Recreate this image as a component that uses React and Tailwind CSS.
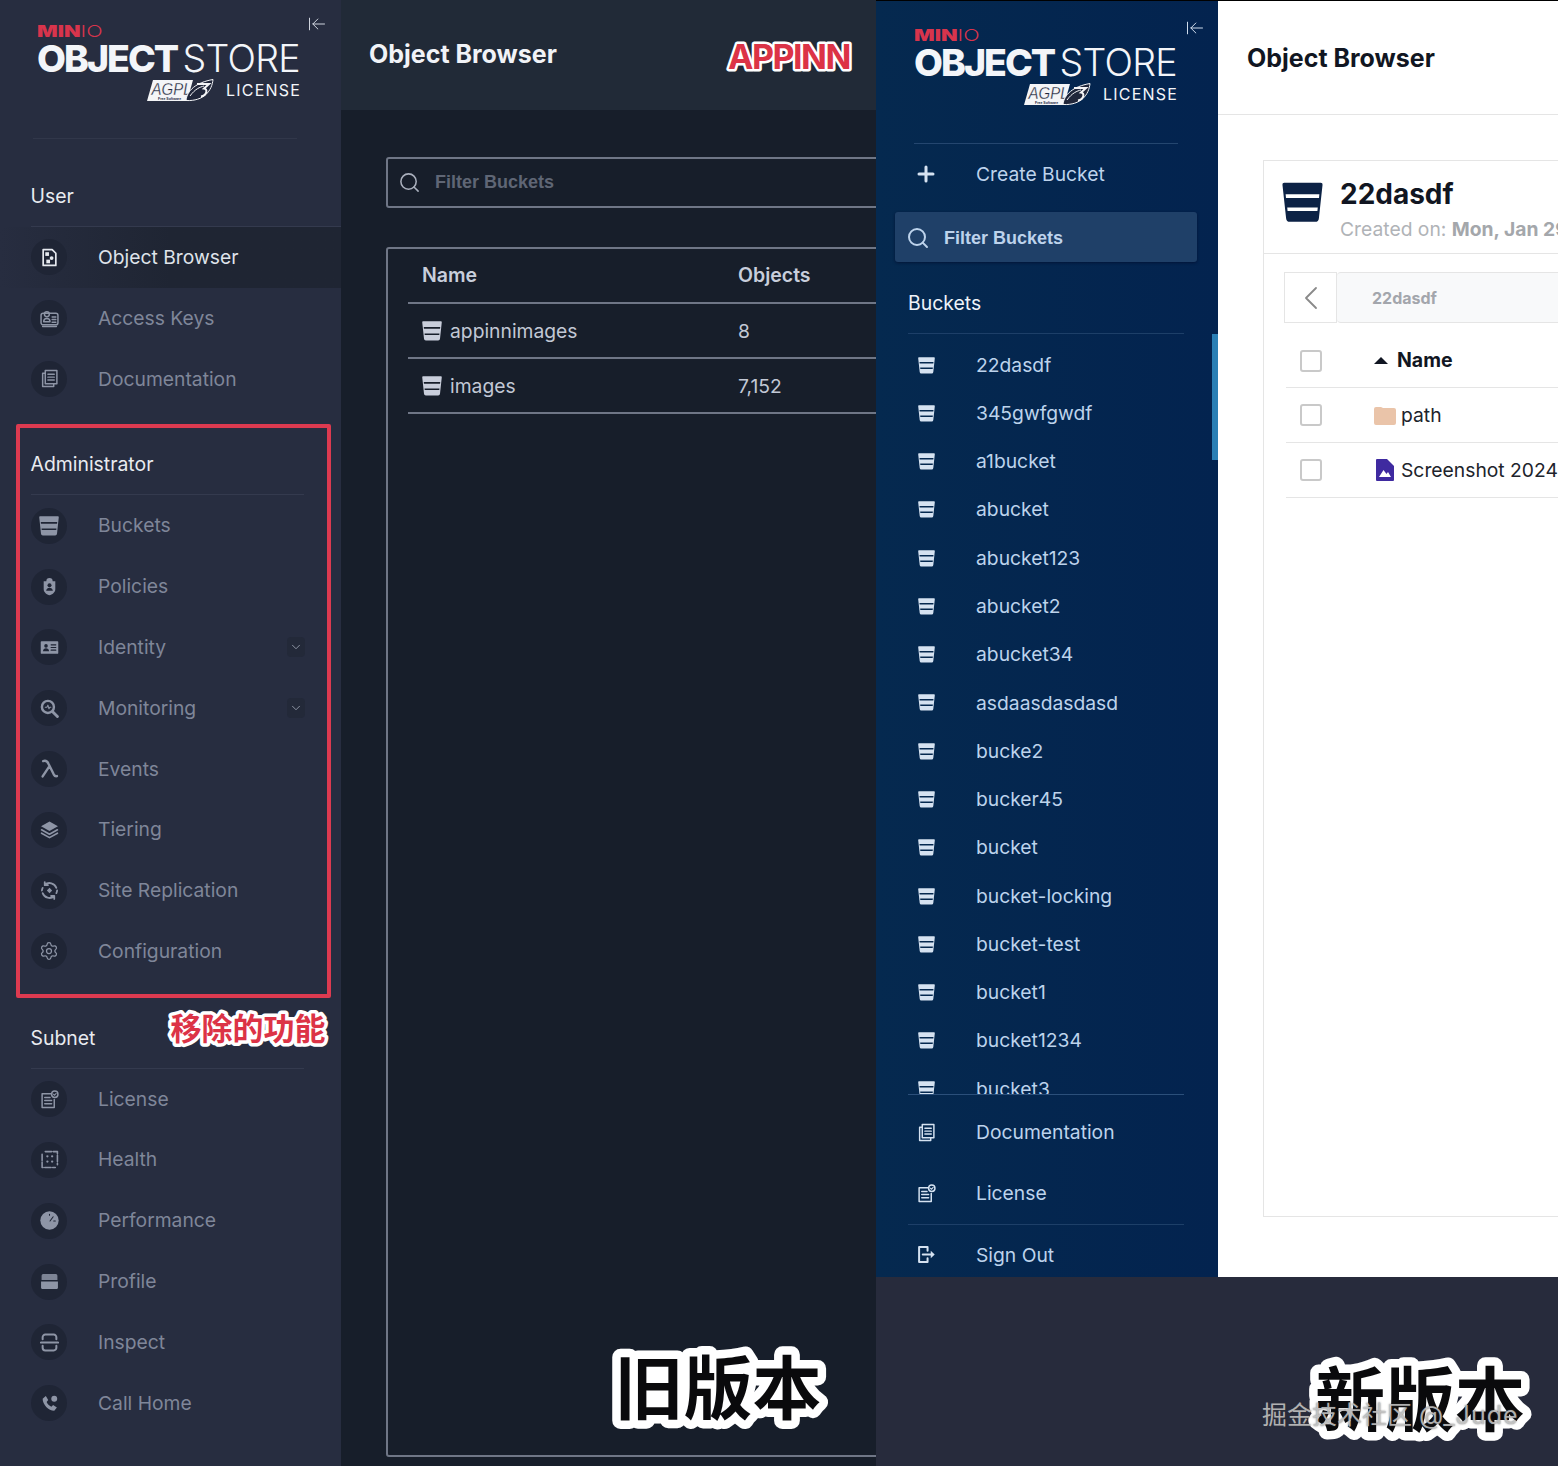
import React from "react";
import { ArrowLeftToLine, Search, ChevronDown, ChevronLeft, Plus, Settings } from "lucide-react";

const FONT = { fontFamily: "Inter, 'Noto Sans CJK SC', sans-serif" };

const Svg = ({ children, size = 19 }) => (
  <svg width={size} height={size} viewBox="0 0 18 18" fill="none" stroke="currentColor" strokeWidth="1.400" strokeLinejoin="round" strokeLinecap="round">
    {children}
  </svg>
);

const Bucket = ({ size = 20 }) => (
  <svg width={size} height={size} viewBox="0 0 18 18" fill="currentColor" stroke="none">
    <path fillRule="evenodd" d="M1 .3h16a.8.8 0 0 1 .8.9L16.200 15.900a1.700 1.700 0 0 1-1.700 1.600h-11a1.700 1.700 0 0 1-1.700-1.600L.2 1.200A.8.8 0 0 1 1 .3ZM1.600 5.400l.15 1.600h14.500l.15-1.600ZM2.300 11.200l.15 1.500h13.100l.15-1.500Z" />
  </svg>
);

const icons = {
  browser: (
    <Svg>
      <path d="M3 1.500h8.500L15 5v11.500H3Z" strokeWidth="1.600" />
      <rect x="5" y="4" width="3.500" height="3.500" fill="currentColor" stroke="none" />
      <circle cx="11" cy="9.500" r="1.800" fill="currentColor" stroke="none" />
      <rect x="6" y="11" width="3.500" height="3.500" fill="currentColor" stroke="none" />
    </Svg>
  ),
  keys: (
    <Svg>
      <rect x="1" y="4" width="16" height="11" rx="2" />
      <circle cx="6.500" cy="5" r="2.300" />
      <path d="M3.500 12c0-2 1.300-3 3-3s3 1 3 3ZM11.500 7.500h3.500M11.500 10h3.500M11.500 12.500h3.500M2.500 16.500h13" />
    </Svg>
  ),
  docs: (
    <Svg>
      <path d="M5 1.500h11v12.500H5ZM5 4H2.500v12.500H13V14" />
      <path d="M7.500 5h6M7.500 7.700h6M7.500 10.500h6" />
    </Svg>
  ),
  bucket: <Bucket />,
  policy: (
    <Svg>
      <path d="M9 1a3 3 0 0 1 3 3h2.500v7.500c0 3-3 5-5.500 5.800C6.500 16.500 3.500 14.500 3.500 11.500V4H6a3 3 0 0 1 3-3Z" fill="currentColor" stroke="none" />
      <circle cx="9" cy="7.800" r="1.900" fill="#1f2535" stroke="none" />
      <path d="M5.800 13c.3-1.800 1.600-2.800 3.200-2.800s2.900 1 3.200 2.800Z" fill="#1f2535" stroke="none" />
    </Svg>
  ),
  identity: (
    <Svg>
      <path fillRule="evenodd" d="M1.500 3h15a.8.8 0 0 1 .8.8v10.400a.8.8 0 0 1-.8.800h-15a.8.8 0 0 1-.8-.8V3.800a.8.8 0 0 1 .8-.8Z" fill="currentColor" stroke="none" />
      <circle cx="5.700" cy="7.500" r="1.700" fill="#1f2535" stroke="none" />
      <path d="M2.800 12.500c.2-1.800 1.400-2.700 2.900-2.700s2.700.9 2.900 2.700Z" fill="#1f2535" stroke="none" />
      <path d="M10.500 6.500h4.500M10.500 9h4.500M10.500 11.500h4.500" stroke="#1f2535" strokeWidth="1" />
    </Svg>
  ),
  monitor: (
    <Svg>
      <circle cx="7.500" cy="7.500" r="5.700" strokeWidth="2.300" />
      <path d="M12 12l4.500 4.500" strokeWidth="2.700" />
      <path d="M5 7.800h1.500l1-2 1 3.500.8-1.500h1" strokeWidth="1" />
    </Svg>
  ),
  lambda: (
    <Svg>
      <path d="M3 2c2.500-.8 4 .2 5 2.500l5 10c.8 1.500 1.700 2 3 1.700M8.500 7.500 2.500 16.500" strokeWidth="2.300" />
    </Svg>
  ),
  tier: (
    <Svg>
      <path d="M9 1.500 17 6l-8 4.500L1 6Z" fill="currentColor" stroke="none" />
      <path d="M1.500 9.300 9 13.500l7.500-4.200M1.500 12.500 9 16.700l7.500-4.200" strokeWidth="1.600" />
    </Svg>
  ),
  replicate: (
    <Svg>
      <path d="M15.500 6.500A7 7 0 0 0 4.500 3.500M2.500 11.500a7 7 0 0 0 11 3M4.500 1v3h3M13.500 17v-3h-3M1.800 9A7 7 0 0 1 2.500 6.500M16.200 9a7 7 0 0 1-.7 2.500" strokeWidth="1.700" />
      <path d="M9 6.500 11.500 9 9 11.500 6.500 9Z" fill="currentColor" stroke="none" />
    </Svg>
  ),
  gear: <Settings size={20} strokeWidth={1.500} />,
  license: (
    <Svg>
      <path d="M11 3.500H2v13h11.500V9" />
      <path d="M4.500 7h5M4.500 10h6.500M4.500 13h6.500" />
      <circle cx="14" cy="4" r="3" />
      <path d="m12.700 4 1 1 1.600-1.800" strokeWidth="1" />
    </Svg>
  ),
  health: (
    <Svg>
      <path d="M2 4v12.500h12.500M5 1.500h11.500V14" strokeWidth="1.500" strokeDasharray="6 1.500" />
      <circle cx="7" cy="6" r="1.100" fill="currentColor" stroke="none" />
      <circle cx="11.500" cy="6" r="1.100" fill="currentColor" stroke="none" />
      <circle cx="7" cy="11" r="1.100" fill="currentColor" stroke="none" />
      <circle cx="11.500" cy="11" r="1.100" fill="currentColor" stroke="none" />
    </Svg>
  ),
  perf: (
    <Svg>
      <circle cx="9" cy="9" r="8.700" fill="currentColor" stroke="none" />
      <path d="m9.500 9.500 3-4M13 9.500h1.500M9 4V3" stroke="#1f2535" strokeWidth="1" />
    </Svg>
  ),
  profile: (
    <Svg>
      <path d="M3 2h12a1.500 1.500 0 0 1 1.500 1.500V7.500h-15V3.500A1.500 1.500 0 0 1 3 2Z" fill="currentColor" stroke="none" opacity=".85" />
      <path d="M1 9h16v6a1 1 0 0 1-1 1H2a1 1 0 0 1-1-1Z" fill="currentColor" stroke="none" />
    </Svg>
  ),
  inspect: (
    <Svg>
      <path d="M2.500 6V4a2.500 2.500 0 0 1 2.500-2.500h8A2.500 2.500 0 0 1 15.500 4v2M2.500 12v2A2.500 2.500 0 0 0 5 16.500h8a2.500 2.500 0 0 0 2.500-2.500v-2" strokeWidth="1.900" />
      <path d="M1 9h16" strokeWidth="2.100" />
    </Svg>
  ),
  phone: (
    <Svg>
      <path d="M2.500 4.500 5.500 2l2.300 3.800L6.300 7.500c.8 1.800 2.300 3.500 4.500 4.500l1.600-1.600 3.600 2.500-2.500 3c-5.500 0-11-6-11-11.400Z" fill="currentColor" stroke="none" />
      <circle cx="13.500" cy="4.500" r="2.800" fill="currentColor" stroke="none" />
    </Svg>
  ),
  signout: (
    <Svg>
      <path d="M10 5.500V2H2v14h8v-3.500" strokeWidth="1.900" />
      <path d="M5.500 9h9" strokeWidth="2" />
      <path d="M13 5.500 16.800 9 13 12.500Z" fill="currentColor" stroke="none" />
    </Svg>
  ),
};

const AgplBadge = () => (
  <svg width="67" height="23" viewBox="0 0 67 23">
    <path d="M6 1h40l-6 21H0Z" fill="#f4f5f7" />
    <text x="4.500" y="15.500" fontFamily="Liberation Sans, sans-serif" fontStyle="italic" fontSize="17" textLength="40" lengthAdjust="spacingAndGlyphs" fill="#20263a" stroke="#f4f5f7" strokeWidth=".3">AGPL</text>
    <text x="11" y="20.500" fontFamily="Liberation Sans, sans-serif" fontWeight="700" fontSize="3.500" fill="#20263a">Free Software</text>
    <path d="M39 21.500c1-10 10-18 27-21-1 11-9 22-27 21Z" fill="#20263a" stroke="#f4f5f7" strokeWidth="1" />
    <path d="M43 17c5-7 10-9 14-10" fill="none" stroke="#f4f5f7" strokeWidth="1" />
    <path d="M50 5h12l-5 4.500c4 .5 3 7-3 8" fill="none" stroke="#f4f5f7" strokeWidth="2" />
  </svg>
);

const Logo = () => (
  <div className="w-[263px] shrink-0 text-[#f3f5f9]">
    <div className="h-[13px] flex items-center text-[16px] leading-none text-[#d8344c] origin-left scale-x-[1.350] whitespace-nowrap">
      <span className="font-black">MIN</span>
      <span className="font-light">IO</span>
    </div>
    <div className="mt-[4px] h-[35px] flex items-center justify-between text-[37.500px] leading-none whitespace-nowrap">
      <span className="font-extrabold tracking-[-2px]">OBJECT</span>
      <span className="font-light tracking-[-0.700px]">STORE</span>
    </div>
    <div className="mt-[3px] flex items-center justify-end gap-[12px]">
      <AgplBadge />
      <span className="text-[16px] leading-none tracking-[1.200px] mr-[-1px] mb-[2px]">LICENSE</span>
    </div>
  </div>
);

const Row = ({ icon, label, active, chevron }) => (
  <div className={`relative h-[60.800px] flex items-center pl-[31px] ${active ? "bg-gradient-to-r from-[#272d40] via-[#1f2533] to-[#1f2533]" : ""}`}>
    <div className={`w-9 h-9 shrink-0 rounded-full bg-[#1f2535] flex items-center justify-center ${active ? "text-[#e6e9ef]" : "text-[#8e95a6]"}`}>
      {icon}
    </div>
    <span className={`ml-[31px] text-[19.300px] ${active ? "text-[#dfe3ea]" : "text-[#7f8699]"}`}>{label}</span>
    {chevron && (
      <span className="absolute left-[287px] w-[18px] h-[20px] rounded-sm bg-[#232939] flex items-center justify-center text-[#9aa1b0]">
        <ChevronDown size={14} strokeWidth={1.500} />
      </span>
    )}
  </div>
);

const SectionLabel = ({ children, h, width }) => (
  <div className={`${h} ${width} ml-[31px] flex items-end pb-[18px] border-b border-[#343a4e] text-[19.400px] leading-[24px] text-[#e9ebf0]`}>
    <span className="-ml-[0.500px]">{children}</span>
  </div>
);

const buckets = ["22dasdf", "345gwfgwdf", "a1bucket", "abucket", "abucket123", "abucket2", "abucket34", "asdaasdasdasd", "bucke2", "bucker45", "bucket", "bucket-locking", "bucket-test", "bucket1", "bucket1234", "bucket3"];

const NewRow = ({ icon, label, h }) => (
  <div className={`${h} flex items-center pl-[32px] shrink-0`}>
    <div className="w-9 h-9 shrink-0 flex items-center justify-center text-[#d5e2f1]">{icon}</div>
    <span className="ml-[32px] text-[19.300px] text-[#bdd3ec]">{label}</span>
  </div>
);

const Sticker = ({ className, w, h, size, stroke, fill, spacing, children }) => (
  <svg width={w} height={h} viewBox={`0 0 ${w} ${h}`} className={`absolute ${className}`}>
    <text
      x={w / 2}
      y={h / 2}
      textAnchor="middle"
      dominantBaseline="central"
      fontSize={size}
      fontWeight="700"
      letterSpacing={spacing}
      fill={fill}
      stroke="#fff"
      strokeWidth={stroke}
      strokeLinejoin="round"
      paintOrder="stroke fill"
      style={FONT}
    >
      {children}
    </text>
  </svg>
);

export default function App() {
  return (
    <div style={FONT} className="relative w-[1558px] h-[1466px] overflow-hidden flex bg-[#272b3c]">
      {/* Old version */}
      <div className="w-[876px] h-full flex shrink-0">
        <aside className="w-[341px] h-full shrink-0 bg-[#272d40]">
          <div className="h-[139px] relative">
            <div className="flex pl-[37px] pt-[24px]">
              <Logo />
              <ArrowLeftToLine size={20} strokeWidth={1.200} className="ml-[7px] -mt-[10px] text-[#cfd4de]" />
            </div>
            <div className="absolute bottom-0 left-[33px] w-[264px] border-b border-[#31374a]" />
          </div>
          <SectionLabel h="h-[88px]" width="w-[310px]">User</SectionLabel>
          <Row active icon={icons.browser} label="Object Browser" />
          <Row icon={icons.keys} label="Access Keys" />
          <Row icon={icons.docs} label="Documentation" />
          <SectionLabel h="h-[86px]" width="w-[273px]">Administrator</SectionLabel>
          <Row icon={icons.bucket} label="Buckets" />
          <Row icon={icons.policy} label="Policies" />
          <Row icon={icons.identity} label="Identity" chevron />
          <Row icon={icons.monitor} label="Monitoring" chevron />
          <Row icon={icons.lambda} label="Events" />
          <Row icon={icons.tier} label="Tiering" />
          <Row icon={icons.replicate} label="Site Replication" />
          <Row icon={icons.gear} label="Configuration" />
          <SectionLabel h="h-[87px]" width="w-[273px]">Subnet</SectionLabel>
          <Row icon={icons.license} label="License" />
          <Row icon={icons.health} label="Health" />
          <Row icon={icons.perf} label="Performance" />
          <Row icon={icons.profile} label="Profile" />
          <Row icon={icons.inspect} label="Inspect" />
          <Row icon={icons.phone} label="Call Home" />
        </aside>
        <main className="flex-1 min-w-0 h-full overflow-hidden bg-[#171e2a]">
          <div className="h-[110px] pl-[28px] flex items-center bg-[#212a37] text-[25px] font-bold text-[#f1f3f7]">Object Browser</div>
          <div className="ml-[45px] mt-[47px] w-[700px] h-[51px] rounded-[3px] border-2 border-[#6f7686] flex items-center pl-[10px] text-[#aab0bd]">
            <Search size={23} strokeWidth={1.600} />
            <span className="ml-[14px] text-[18px] font-bold text-[#5f6675]" style={{ fontFamily: "'Liberation Sans', sans-serif" }}>Filter Buckets</span>
          </div>
          <div className="ml-[45px] mt-[39px] w-[700px] h-[1210px] rounded-[3px] border-2 border-[#6f7686] pl-[20px]">
            <div className="h-[55px] pt-[1px] grid grid-cols-[316px_1fr] items-center pl-[14px] border-b-2 border-[#6f7686] text-[19.500px] font-semibold text-[#c8cedb]">
              <span>Name</span>
              <span>Objects</span>
            </div>
            {[["appinnimages", "8"], ["images", "7,152"]].map(([n, c]) => (
              <div key={n} className="h-[55px] pt-[1px] grid grid-cols-[316px_1fr] items-center pl-[14px] border-b-2 border-[#6f7686] text-[19.300px] text-[#c2c8d5]">
                <span className="flex items-center gap-[8px]"><span className="text-[#c9cedb]"><Bucket size={20} /></span>{n}</span>
                <span>{c}</span>
              </div>
            ))}
          </div>
        </main>
      </div>

      {/* New version */}
      <div className="w-[682px] h-full flex flex-col shrink-0">
        <div className="h-[1277px] flex border-t border-black overflow-hidden">
          <aside className="relative w-[342px] shrink-0 h-full flex flex-col bg-gradient-to-r from-[#05294f] to-[#03234f]">
            <div className="h-[143px] shrink-0 relative">
              <div className="flex pl-[38px] pt-[27px]">
                <Logo />
                <ArrowLeftToLine size={20} strokeWidth={1.200} className="ml-[8px] -mt-[10px] text-[#cfdcec]" />
              </div>
              <div className="absolute bottom-0 left-[38px] w-[264px] border-b border-[#24466f]" />
            </div>
            <NewRow icon={<Plus size={24} strokeWidth={3} />} label="Create Bucket" h="h-[60px]" />
            <div className="ml-[19px] mt-[8px] w-[302px] h-[50px] shrink-0 rounded-[3px] bg-[#1f4068] shadow-[0_1px_3px_rgba(0,10,40,0.6)] flex items-center pl-[11px] pt-[2px] text-[#bdd3ec]">
              <Search size={24} strokeWidth={2} />
              <span className="ml-[14px] text-[18px] font-bold" style={{ fontFamily: "'Liberation Sans', sans-serif" }}>Filter Buckets</span>
            </div>
            <div className="ml-[32px] w-[276px] h-[72px] shrink-0 flex items-end pb-[18px] border-b border-[#1d3f68] text-[19.400px] leading-[24px] text-[#eef3f9]">Buckets</div>
            <div className="h-[760px] shrink-0 overflow-hidden pt-[7px]">
              {buckets.map((b) => (
                <NewRow key={b} icon={<Bucket size={17} />} label={b} h="h-[48.270px]" />
              ))}
            </div>
            <div className="absolute right-0 top-[333px] w-[6px] h-[126px] bg-[#2a7fb5]" />
            <div className="ml-[32px] w-[276px] shrink-0 border-b border-[#2b4f7a]" />
            <div className="shrink-0 pt-[7px]">
              <NewRow icon={icons.docs} label="Documentation" h="h-[60.800px]" />
              <NewRow icon={icons.license} label="License" h="h-[60.800px]" />
            </div>
            <div className="ml-[32px] w-[276px] shrink-0 border-b border-[#1d3f68]" />
            <NewRow icon={icons.signout} label="Sign Out" h="h-[60.800px]" />
          </aside>
          <main className="flex-1 min-w-0 h-full overflow-hidden bg-white">
            <div className="h-[114px] pl-[29px] pt-[3px] flex items-center border-b border-[#e5e5e5] text-[25px] font-bold text-[#111622]">Object Browser</div>
            <div className="ml-[45px] mt-[45px] w-[700px] h-[1057px] border border-[#e5e5e5]">
              <div className="h-[93px] flex border-b border-[#e5e5e5] whitespace-nowrap">
                <span className="ml-[18px] mt-[21px] text-[#0c2245]"><Bucket size={41} /></span>
                <div className="ml-[17px] mt-[15px]">
                  <div className="text-[28px] leading-[36px] font-bold text-[#111622]">22dasdf</div>
                  <div className="text-[19.300px] leading-[34px] text-[#b0b3b7]">Created on: <span className="font-bold text-[#a4a7ab]">Mon, Jan 29, 2024</span></div>
                </div>
              </div>
              <div className="ml-[20px] mt-[18px] h-[51px] flex">
                <div className="w-[53px] border border-[#e5e5e5] flex items-center justify-center text-[#8a8a8a]">
                  <ChevronLeft size={40} strokeWidth={1.100} />
                </div>
                <div className="flex-1 border border-l-0 border-[#e5e5e5] bg-[#f8f9fa] rounded-l-sm flex items-center pl-[35px] text-[16px] font-bold text-[#a3a6ac]">22dasdf</div>
              </div>
              <div className="ml-[22px] mt-[10px] h-[55px] pt-[1px] flex items-center pl-[14px] border-b border-[#e5e5e5]">
                <span className="w-[22px] h-[22px] rounded-[3px] border-2 border-[#c9c9c9]" />
                <svg width="14" height="7" viewBox="0 0 14 7" className="ml-[52px]"><path d="M7 0l7 7H0Z" fill="#111622" /></svg>
                <span className="ml-[9px] text-[19.500px] font-bold text-[#111622]">Name</span>
              </div>
              <div className="ml-[22px] h-[55px] flex items-center pl-[14px] border-b border-[#e5e5e5]">
                <span className="w-[22px] h-[22px] rounded-[3px] border-2 border-[#c9c9c9]" />
                <svg width="22" height="19" viewBox="0 0 22 19" className="ml-[52px]"><path d="M0 3a2 2 0 0 1 2-2h5l2 1h11a2 2 0 0 1 2 2v13a2 2 0 0 1-2 2H2a2 2 0 0 1-2-2Z" fill="#eac4a9" /></svg>
                <span className="ml-[5px] text-[19.300px] text-[#20232b]">path</span>
              </div>
              <div className="ml-[22px] h-[55px] flex items-center pl-[14px] border-b border-[#e5e5e5] whitespace-nowrap">
                <span className="w-[22px] h-[22px] rounded-[3px] border-2 border-[#c9c9c9] shrink-0" />
                <svg width="18" height="22" viewBox="0 0 18 22" className="ml-[54px] shrink-0"><path d="M1 0h10l7 7v14a1 1 0 0 1-1 1H1a1 1 0 0 1-1-1V1a1 1 0 0 1 1-1Z" fill="#3f2aa0" /><path d="M3 18l4.500-7 3 4 1.500-2 3 5Z" fill="#fff" /></svg>
                <span className="ml-[7px] text-[19.300px] text-[#20232b]">Screenshot 2024-01-29 at 10.32.10.png</span>
              </div>
            </div>
          </main>
        </div>
        <div className="flex-1 bg-[#272b3c]" />
      </div>

      {/* Annotations laid over both screenshots */}
      <div className="absolute left-[16px] top-[424px] w-[315px] h-[574px] border-[4px] border-[#dd3a50] rounded-[2px]" />
      <Sticker className="left-[158px] top-[1003px]" w={180} h={50} size={31} stroke={7} fill="#dc3346">移除的功能</Sticker>
      <Sticker className="left-[709px] top-[31px]" w={160} h={50} size={34} stroke={5} spacing={-1.500} fill="#dc3346">APPINN</Sticker>
      <Sticker className="left-[598px] top-[1339px]" w={240} h={100} size={69} stroke={17} fill="#0a0a0c">旧版本</Sticker>
      <Sticker className="left-[1300px] top-[1350px]" w={240} h={100} size={70} stroke={17} fill="#0a0a0c">新版本</Sticker>
      <div className="absolute left-[1262px] top-[1400px] text-[25px] leading-[30px] whitespace-nowrap text-[#c9c9c9]/85 [text-shadow:0_0_2px_rgba(60,60,60,0.7)]">掘金技术社区 <span className="tracking-[1px]">@_Jude</span></div>
    </div>
  );
}
